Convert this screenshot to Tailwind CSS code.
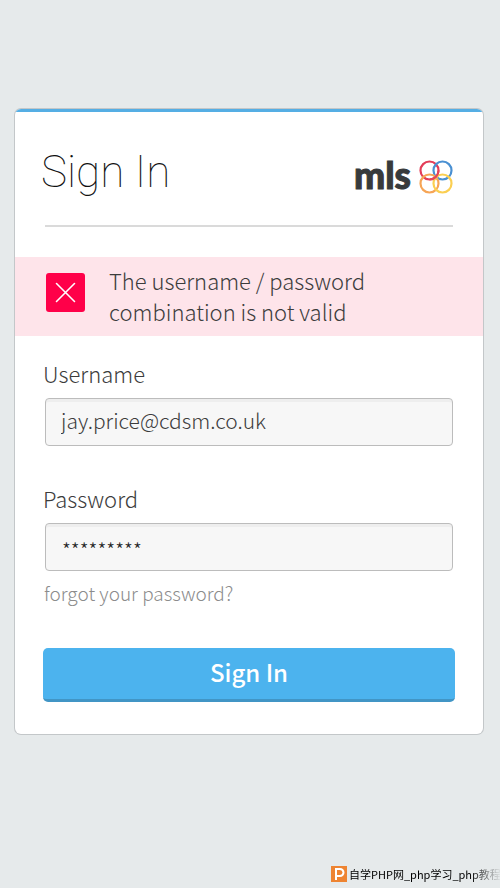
<!DOCTYPE html>
<html lang="en">
<head>
<meta charset="utf-8">
<meta name="viewport" content="width=device-width, initial-scale=1">
<title>Sign In</title>
<script src="https://cdn.jsdelivr.net/npm/@tailwindcss/browser@4"></script>
</head>
<body class="flex min-h-screen flex-col bg-[#e6eaeb] font-['Noto_Sans_CJK_SC',sans-serif] font-light text-[#3c3c3c]">
<main class="pt-[109px] pr-[17px] pl-[15px]">
  <section class="overflow-hidden rounded-md bg-white shadow-[0_0_0_1px_#c3c7c9]">
    <div class="h-[3px] bg-[#55aee4]"></div>
    <header class="mx-[30px] flex h-[115px] items-center justify-between border-b-2 border-[#dadada]">
      <h1 class="-ml-1 pt-1.5 font-['Roboto',sans-serif] text-[44px] leading-none font-thin text-[#111111]">Sign In</h1>
      <div class="flex items-center gap-2 pt-4">
        <span class="pb-1 font-['Lato',sans-serif] text-[37px] leading-none font-black text-[#373a3c] [-webkit-text-stroke:1px_#373a3c]">mls</span>
        <svg class="size-[34px]" viewBox="0 0 34 34" fill="none" stroke-width="2.200" aria-hidden="true">
          <circle cx="10.500" cy="10.500" r="9" stroke="#e33d58"/>
          <circle cx="23.500" cy="10.500" r="9" stroke="#4a90d2"/>
          <circle cx="10.500" cy="23.500" r="9" stroke="#f6a556"/>
          <circle cx="23.500" cy="23.500" r="9" stroke="#fbcf52"/>
          <path d="M10.500 19.500A9 9 0 0 0 19.500 10.500" stroke="#e3455a"/>
        </svg>
      </div>
    </header>
    <div role="alert" class="mt-[30px] flex items-start gap-6 bg-[#fee4ea] pt-2 pb-[9px] pl-[31px]">
      <svg class="mt-2 size-[39px] shrink-0" viewBox="0 0 39 39" aria-hidden="true">
        <rect width="39" height="39" rx="3" fill="#ff0049"/>
        <path d="M10.500 10.500l18 18m0-18l-18 18" stroke="#fff" stroke-width="1.600" stroke-linecap="round"/>
      </svg>
      <p class="text-[22px] leading-[31px]">The username / password<br>combination is not valid</p>
    </div>
    <form class="px-[30px] pt-[21px] pb-8">
      <label for="username" class="-ml-0.5 block text-[22px] leading-8">Username</label>
      <input id="username" type="text" value="jay.price@cdsm.co.uk" class="mt-[9px] block h-12 w-full rounded-sm border border-[#bcbcbc] bg-[#f7f7f7] px-[15px] pb-1 text-[21px] shadow-[inset_0_3px_0_#eeeeee] outline-none">
      <label for="password" class="mt-9 -ml-0.5 block text-[22px] leading-8">Password</label>
      <input id="password" type="text" value="*********" autocomplete="off" class="mt-[9px] block h-12 w-full rounded-sm border border-[#bcbcbc] bg-[#f7f7f7] px-4 pt-1 text-[20px] font-light text-[#222222] shadow-[inset_0_3px_0_#eeeeee] outline-none">
      <a href="#" class="-ml-px mt-1.5 block text-[19px] leading-8 text-[#8c8c8c]">forgot your password?</a>
      <button type="submit" class="-mx-0.5 mt-[39px] block h-[54px] w-[calc(100%+4px)] rounded-[5px] border-b-[3px] border-[#4195c5] bg-[#4cb3ee] pb-1 text-[24px] leading-none font-medium text-white">Sign In</button>
    </form>
  </section>
</main>
<footer class="mt-auto flex h-6 items-center justify-end gap-0.5 overflow-hidden pb-1">
  <svg class="size-4 shrink-0" viewBox="0 0 16 16" aria-hidden="true">
    <rect width="16" height="16" fill="#ee8432"/>
    <path d="M5 14V3h4a3 3 0 0 1 0 7H5" fill="none" stroke="#fff" stroke-width="2"/>
  </svg>
  <span class="w-[151px] bg-linear-to-r from-black from-80% to-black/5 bg-clip-text text-[11px] leading-5 font-normal whitespace-nowrap text-transparent">自学PHP网_php学习_php教程</span>
</footer>
</body>
</html>
